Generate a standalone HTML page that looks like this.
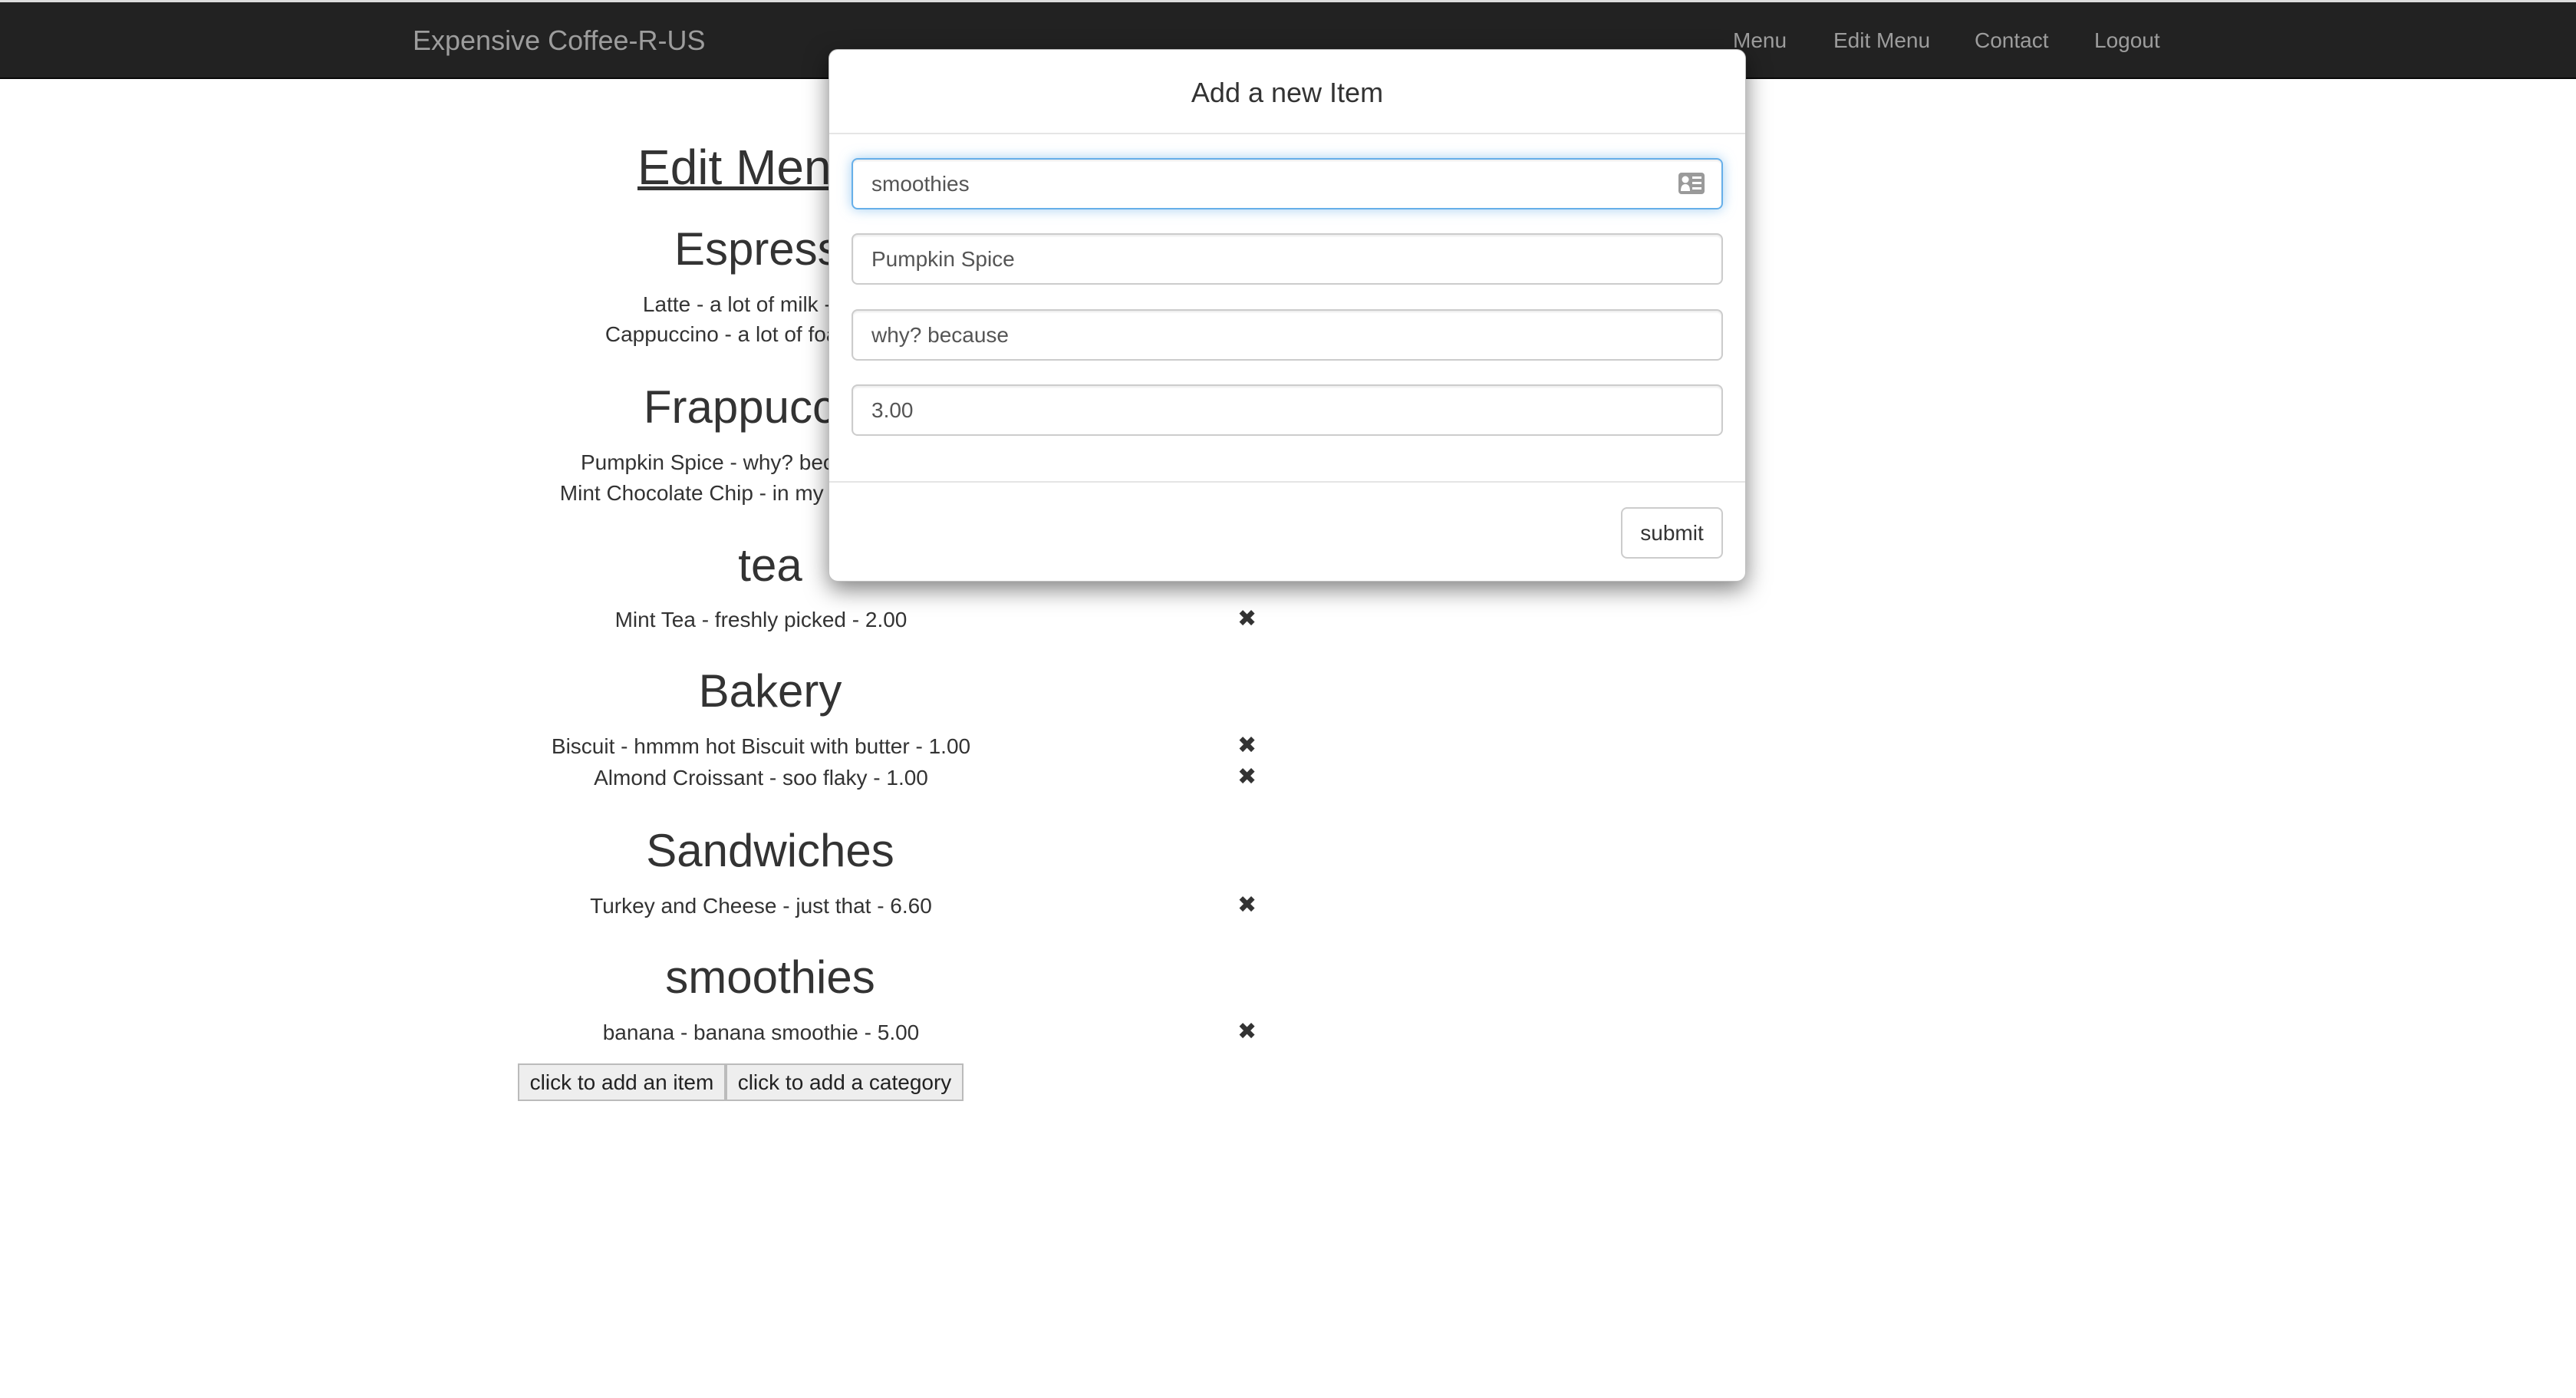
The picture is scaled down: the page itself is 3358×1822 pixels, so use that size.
<!DOCTYPE html>
<html><head><meta charset="utf-8"><style>
*{margin:0;padding:0;box-sizing:border-box}
body{width:3358px;height:1822px;background:#fff;font-family:"Liberation Sans",Arial,sans-serif;color:#333;position:relative;overflow:hidden}
.nav{position:absolute;left:0;top:3px;width:3358px;height:100px;background:#222;border-bottom:2px solid #080808}
.topline{position:absolute;left:0;top:0;width:3358px;height:3px;background:#ddd}
.brand{position:absolute;left:538px;top:28px;font-size:36px;line-height:44px;color:#9d9d9d}
.nl{position:absolute;top:32px;font-size:28px;line-height:36px;color:#9d9d9d}
.h{position:absolute;left:0;width:2008px;text-align:center;font-size:60px;height:80px;line-height:80px;white-space:nowrap}
.it{position:absolute;left:0;width:1984px;text-align:center;font-size:28px;height:40px;line-height:40px;white-space:nowrap}
.x{position:absolute;left:1613px;font-size:30px;height:40px;line-height:40px;color:#333}
.btn{position:absolute;top:1386px;height:49px;background:#eee;border:2px solid #bbb;font-size:28px;line-height:45px;text-align:center;color:#222}
.modal{position:absolute;left:1080px;top:64px;width:1196px;height:694px;background:#fff;border:1px solid rgba(0,0,0,.25);border-radius:12px;box-shadow:0 10px 30px rgba(0,0,0,.5)}
.mt{position:absolute;left:0;top:0;width:100%;height:110px;line-height:112px;text-align:center;font-size:36px;border-bottom:2px solid #e5e5e5}
.inp{position:absolute;left:29px;width:1136px;height:67px;border:2px solid #ccc;border-radius:8px;font-size:28px;line-height:63px;padding-left:24px;color:#555;box-shadow:inset 0 2px 2px rgba(0,0,0,.08)}
.focus{border-color:#66afe9;box-shadow:inset 0 2px 2px rgba(0,0,0,.08),0 0 16px rgba(102,175,233,.6)}
.foot{position:absolute;left:0;top:562px;width:100%;border-top:2px solid #e5e5e5}
.sub{position:absolute;left:1032px;top:596px;width:133px;height:67px;border:2px solid #ccc;border-radius:8px;font-size:28px;line-height:63px;text-align:center;color:#333}
</style></head><body>
<div class="topline"></div>
<div class="nav">
<div class="brand">Expensive Coffee-R-US</div>
<div class="nl" style="left:2259px">Menu</div>
<div class="nl" style="left:2390px">Edit Menu</div>
<div class="nl" style="left:2574px">Contact</div>
<div class="nl" style="left:2730px">Logout</div>
</div>

<div style="position:absolute;left:831px;top:178px;font-size:64px;line-height:80px;text-decoration:underline;text-decoration-thickness:5px">Edit Menu</div>
<div class="h" style="top:285px">Espresso</div>
<div class="it" style="top:377px">Latte - a lot of milk - 4.00</div>
<div class="it" style="top:416px">Cappuccino - a lot of foam - 4.00</div>
<div class="h" style="top:491px">Frappuccino</div>
<div class="it" style="top:583px">Pumpkin Spice - why? because - 3.00</div>
<div class="it" style="top:623px">Mint Chocolate Chip - in my dreams - 5.00</div>
<div class="h" style="top:697px">tea</div>
<div class="it" style="top:788px">Mint Tea - freshly picked - 2.00</div>
<div class="x" style="top:787px">✖</div>
<div class="h" style="top:861px">Bakery</div>
<div class="it" style="top:953px">Biscuit - hmmm hot Biscuit with butter - 1.00</div>
<div class="x" style="top:952px">✖</div>
<div class="it" style="top:994px">Almond Croissant - soo flaky - 1.00</div>
<div class="x" style="top:993px">✖</div>
<div class="h" style="top:1069px">Sandwiches</div>
<div class="it" style="top:1161px">Turkey and Cheese - just that - 6.60</div>
<div class="x" style="top:1160px">✖</div>
<div class="h" style="top:1234px">smoothies</div>
<div class="it" style="top:1326px">banana - banana smoothie - 5.00</div>
<div class="x" style="top:1325px">✖</div>
<div class="btn" style="left:675px;width:271px">click to add an item</div>
<div class="btn" style="left:946px;width:310px">click to add a category</div>

<div class="modal">
<div class="mt">Add a new Item</div>
<div class="inp focus" style="top:141px">smoothies
<svg style="position:absolute;right:22px;top:17px" width="34" height="28" viewBox="0 0 34 28"><rect x="0" y="0" width="34" height="28" rx="4" fill="#9a9a9a"/><circle cx="9" cy="9" r="4.5" fill="#fff"/><path d="M3 24 Q3 15 9 15 Q15 15 15 24 Z" fill="#fff"/><rect x="18" y="5" width="12" height="3" fill="#fff"/><rect x="18" y="12" width="12" height="3" fill="#fff"/><rect x="18" y="19" width="12" height="3" fill="#fff"/></svg>
</div>
<div class="inp" style="top:239px">Pumpkin Spice</div>
<div class="inp" style="top:338px">why? because</div>
<div class="inp" style="top:436px">3.00</div>
<div class="foot"></div>
<div class="sub">submit</div>
</div>
</body></html>
